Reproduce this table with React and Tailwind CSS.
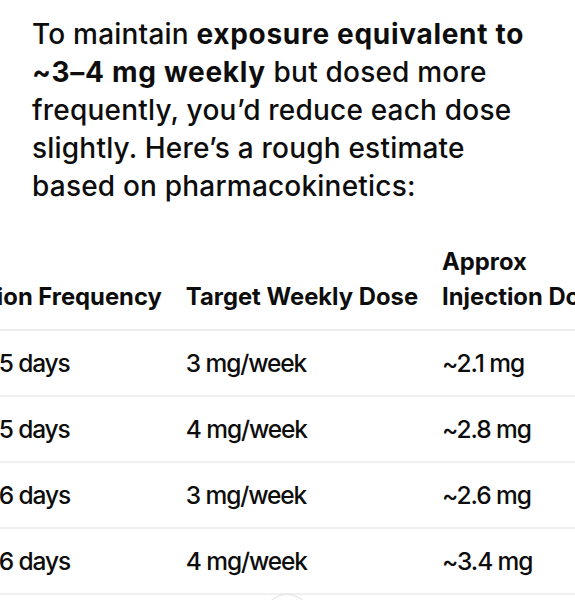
import React from 'react';

const rows = [
  ['Every 5 days', '3 mg/week', '~2.1 mg'],
  ['Every 5 days', '4 mg/week', '~2.8 mg'],
  ['Every 6 days', '3 mg/week', '~2.6 mg'],
  ['Every 6 days', '4 mg/week', '~3.4 mg'],
];

const App = () => {
  return (
    <div
      className="relative w-[575px] h-[600px] overflow-hidden bg-white text-[#0d0d0d]"
      style={{ fontFamily: 'Inter, "Noto Sans", sans-serif' }}
    >
      <p className="pt-[15px] pl-8 text-[28px] leading-[38px] tracking-[0.2px] font-[450]">
        To maintain <strong className="font-bold tracking-[0.7px]">exposure equivalent to</strong>
        <br />
        <strong className="font-bold tracking-[0.7px]">~3–4 mg weekly</strong> but dosed more
        <br />
        frequently, you’d reduce each dose
        <br />
        slightly. Here’s a rough estimate
        <br />
        based on pharmacokinetics:
      </p>

      <div className="mt-[39px] overflow-hidden">
        <table className="-ml-[80px] border-collapse text-left">
          <thead>
            <tr className="border-b-2 border-[#ececec]">
              <th className="px-3 pb-[15px] align-bottom text-[23.8px] leading-[35px] font-bold whitespace-nowrap">
                Injection Frequency
              </th>
              <th className="px-3 pb-[15px] align-bottom text-[23.8px] leading-[35px] font-bold whitespace-nowrap">
                Target Weekly Dose
              </th>
              <th className="px-3 pb-[15px] align-bottom text-[23.8px] leading-[35px] font-bold whitespace-nowrap">
                Approx
                <br />
                Injection Dose
              </th>
            </tr>
          </thead>
          <tbody>
            {rows.map((r, i) => (
              <tr key={i} className="border-b-2 border-[#f0f0f0]">
                {r.map((c, j) => (
                  <td
                    key={j}
                    className="px-3 py-[15px] text-[24.5px] leading-[34px] tracking-[-1.1px] font-[450] whitespace-nowrap"
                  >
                    {c}
                  </td>
                ))}
              </tr>
            ))}
          </tbody>
        </table>
      </div>

      {/* scroll-down button peeking at the bottom */}
      <div className="absolute left-[263px] top-[594px] w-[48px] h-[48px] rounded-full border border-[#e5e5e5] bg-white shadow-sm" />
    </div>
  );
};

export default App;
